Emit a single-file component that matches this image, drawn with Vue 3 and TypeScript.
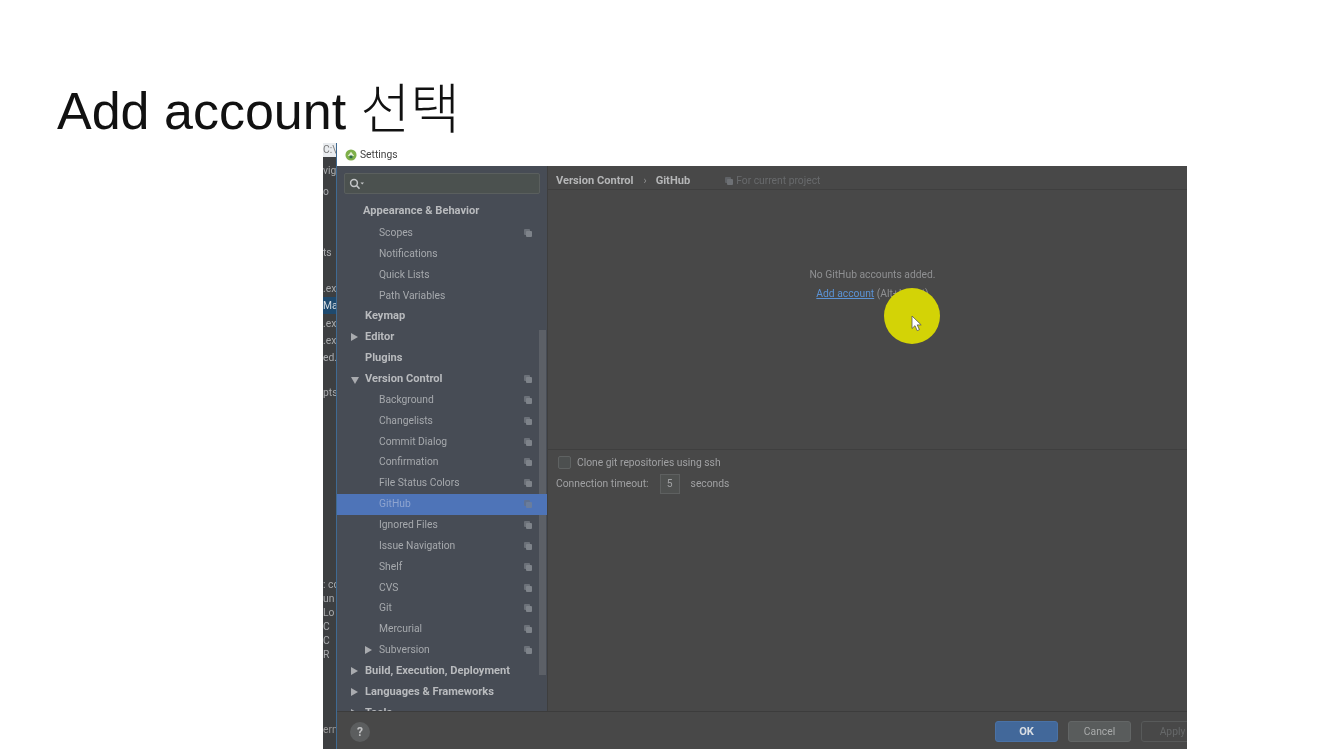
<script setup lang="ts">
interface NavRow {
  label: string
  level: 0 | 1 | 2
  bold?: boolean
  arrow?: 'right' | 'down'
  shared?: boolean
  active?: boolean
}

const navRows: NavRow[] = [
  { label: 'Scopes', level: 2, shared: true },
  { label: 'Notifications', level: 2 },
  { label: 'Quick Lists', level: 2 },
  { label: 'Path Variables', level: 2 },
  { label: 'Keymap', level: 1, bold: true },
  { label: 'Editor', level: 1, bold: true, arrow: 'right' },
  { label: 'Plugins', level: 1, bold: true },
  { label: 'Version Control', level: 1, bold: true, arrow: 'down', shared: true },
  { label: 'Background', level: 2, shared: true },
  { label: 'Changelists', level: 2, shared: true },
  { label: 'Commit Dialog', level: 2, shared: true },
  { label: 'Confirmation', level: 2, shared: true },
  { label: 'File Status Colors', level: 2, shared: true },
  { label: 'GitHub', level: 2, shared: true, active: true },
  { label: 'Ignored Files', level: 2, shared: true },
  { label: 'Issue Navigation', level: 2, shared: true },
  { label: 'Shelf', level: 2, shared: true },
  { label: 'CVS', level: 2, shared: true },
  { label: 'Git', level: 2, shared: true },
  { label: 'Mercurial', level: 2, shared: true },
  { label: 'Subversion', level: 2, arrow: 'right', shared: true },
  { label: 'Build, Execution, Deployment', level: 1, bold: true, arrow: 'right' },
  { label: 'Languages & Frameworks', level: 1, bold: true, arrow: 'right' },
  { label: 'Tools', level: 1, bold: true, arrow: 'right' },
]

// bits of the IDE that stick out behind the dialog
const behind: { text: string; gap: number; selected?: boolean; dot?: boolean }[] = [
  { text: 'C:\\', gap: 0 },
  { text: 'vig', gap: 7 },
  { text: 'o', gap: 7 },
  { text: 'ts', gap: 47 },
  { text: '.ex', gap: 22 },
  { text: 'Mai', gap: 1, selected: true },
  { text: '.ex', gap: 3 },
  { text: '.ex', gap: 3 },
  { text: 'ed.', gap: 3 },
  { text: 'pts', gap: 21 },
  { text: ': co', gap: 178 },
  { text: 'un l', gap: 0 },
  { text: 'Lo', gap: 0, dot: true },
  { text: 'C', gap: 0, dot: true },
  { text: 'C', gap: 0, dot: true },
  { text: 'R', gap: 0, dot: true },
]
</script>

<template>
  <div class="slide">
    <h1 class="title">Add account <span class="title__ko">선택</span></h1>

    <div class="shot">
      <div class="behind">
        <div
          v-for="(item, i) in behind"
          :key="i"
          class="behind__row"
          :class="{ 'behind__row--selected': item.selected, 'behind__row--dot': item.dot }"
          :style="{ marginTop: item.gap + 'px' }"
        >
          {{ item.text }}
        </div>
        <div class="behind__end">ern</div>
      </div>

      <div class="dialog">
        <div class="titlebar">
          <svg class="titlebar__logo" width="12" height="12" viewBox="0 0 13 13">
            <circle cx="6.5" cy="6.5" r="6" fill="#7fb04a" />
            <path d="M3 7.5 6.5 3 10 7.5Z" fill="#e8f0d8" />
            <rect x="5" y="7" width="3" height="3" fill="#2e6b4f" />
          </svg>
          <span>Settings</span>
        </div>

        <div class="body">
          <aside class="sidebar">
            <div class="search">
              <svg width="16" height="12" viewBox="0 0 16 12">
                <circle cx="5" cy="5" r="3.4" fill="none" stroke="#c4c6c8" stroke-width="1.5" />
                <path d="M7.5 7.5 10.5 10.8" stroke="#c4c6c8" stroke-width="1.6" />
                <path d="M11.5 4.5h3.5l-1.75 2z" fill="#c4c6c8" />
              </svg>
            </div>
            <div class="nav">
              <div class="nav__head">Appearance &amp; Behavior</div>
              <div
                v-for="row in navRows"
                :key="row.label"
                class="nav__row"
                :class="[
                  `nav__row--l${row.level}`,
                  { 'nav__row--bold': row.bold, 'nav__row--active': row.active },
                ]"
              >
                <span v-if="row.arrow" class="arrow" :class="`arrow--${row.arrow}`"></span>
                <span class="nav__label">{{ row.label }}</span>
                <svg v-if="row.shared" class="copy" width="8" height="8" viewBox="0 0 8 8">
                  <rect x="0" y="0" width="6" height="6" rx="1" fill="#6b7078" />
                  <rect x="2" y="2" width="6" height="6" rx="1" fill="#7e838a" />
                </svg>
              </div>
              <div class="scrollbar"></div>
            </div>
          </aside>

          <main class="content">
            <div class="crumbs">
              <b>Version Control</b>
              <span class="crumbs__sep">›</span>
              <b>GitHub</b>
              <span class="crumbs__project">
                <svg width="8" height="8" viewBox="0 0 8 8">
                  <rect x="0" y="0" width="6" height="6" rx="1" fill="#5f6266" />
                  <rect x="2" y="2" width="6" height="6" rx="1" fill="#6e7175" />
                </svg>
                For current project
              </span>
            </div>

            <div class="accounts">
              <div>No GitHub accounts added.</div>
              <div class="accounts__add"><a class="link">Add account</a> (Alt+Insert)</div>
            </div>

            <div class="options">
              <label class="check"><span class="check__box"></span>Clone git repositories using ssh</label>
              <div class="timeout">
                <span>Connection timeout:</span>
                <span class="timeout__input">5</span>
                <span>seconds</span>
              </div>
            </div>
          </main>
        </div>

        <footer class="footer">
          <span class="help">?</span>
          <div class="buttons">
            <button class="btn btn--ok">OK</button>
            <button class="btn btn--cancel">Cancel</button>
            <button class="btn btn--apply">Apply</button>
          </div>
        </footer>
      </div>

      <div class="highlight">
        <svg width="12" height="17" viewBox="0 0 12 17">
          <path d="M1 1v12.5l3-2.8 2.2 5 2.2-1-2.2-4.8h4z" fill="#fff" stroke="#555" stroke-width="0.8" />
        </svg>
      </div>
    </div>
  </div>
</template>

<style scoped>
.slide {
  width: 1330px;
  height: 749px;
  display: flex;
  flex-direction: column;
  overflow: hidden;
  background: #fff;
}

.title {
  margin: 0;
  height: 143px;
  box-sizing: border-box;
  padding: 79px 0 0 57px;
  font: 400 52px/62px 'Liberation Sans', 'Noto Sans CJK KR', sans-serif;
  color: #111;
}

.title__ko {
  font-weight: 200;
  font-size: 54px;
}

.shot {
  position: relative;
  display: flex;
  width: 864px;
  height: 606px;
  margin-left: 323px;
  overflow: hidden;
  filter: blur(0.45px);
  font: 400 10.3px/21px Roboto, sans-serif;
  color: #a6a9ad;
}

.shot b {
  font-size: 11.1px;
}

.behind {
  width: 13px;
  flex-shrink: 0;
  overflow: hidden;
  background: #3d3f41;
  border-right: 1px solid #3f6a92;
  box-sizing: content-box;
  color: #a9abad;
  white-space: nowrap;
  position: relative;
}

.behind__row {
  height: 14px;
  line-height: 14px;
}

.behind__row:first-child {
  margin-top: 0;
  background: #e9ecef;
  color: #777;
  height: 14px;
  line-height: 14px;
}

.behind__row--selected {
  background: #1f4a6e;
  color: #d5dbe0;
  height: 17px;
  line-height: 17px;
}

.behind__row--dot {
  color: #a9abad;
}

.behind__end {
  position: absolute;
  left: 0;
  bottom: 9px;
  color: #999;
}

.dialog {
  flex: 1;
  min-width: 0;
  display: flex;
  flex-direction: column;
  background: #484848;
}

.titlebar {
  height: 23px;
  display: flex;
  align-items: center;
  gap: 3px;
  padding: 0 0 0 8px;
  background: #fff;
  color: #444;
}

.body {
  flex: 1;
  min-height: 0;
  display: flex;
}

.sidebar {
  width: 210px;
  flex-shrink: 0;
  display: flex;
  flex-direction: column;
  background: #474c55;
  overflow: hidden;
}

.search {
  height: 21px;
  margin: 7px 7px 0;
  display: flex;
  align-items: center;
  padding-left: 4px;
  background: #4b514f;
  border: 1px solid #5a5f5e;
  border-radius: 2px;
  box-sizing: border-box;
}

.nav {
  position: relative;
  flex: 1;
  min-height: 0;
  overflow: hidden;
  padding-top: 5px;
}

.nav__head {
  height: 24px;
  line-height: 24px;
  padding-left: 26px;
  font-size: 11.1px;
  font-weight: 700;
  color: #b9bbbe;
}

.nav__row {
  position: relative;
  height: 20.87px;
  line-height: 20.87px;
  white-space: nowrap;
}

.nav__row--l1 {
  padding-left: 28px;
}

.nav__row--l2 {
  padding-left: 42px;
}

.nav__row--bold {
  font-size: 11.1px;
  font-weight: 700;
  color: #b9bbbe;
}

.nav__row--active {
  z-index: 1;
  background: #4e74b8;
  color: #8ea4cf;
}

.arrow {
  position: absolute;
  top: 6px;
  width: 0;
  height: 0;
}

.nav__row--l1 .arrow {
  left: 14px;
}

.nav__row--l2 .arrow {
  left: 28px;
}

.arrow--right {
  border-left: 7px solid #a9abaf;
  border-top: 4.5px solid transparent;
  border-bottom: 4.5px solid transparent;
}

.arrow--down {
  margin-top: 2px;
  border-top: 7px solid #a9abaf;
  border-left: 4px solid transparent;
  border-right: 4px solid transparent;
}

.copy {
  position: absolute;
  top: 6px;
  left: 187px;
}

.nav__row--active .copy {
  opacity: 0.6;
}

.scrollbar {
  position: absolute;
  top: 136px;
  left: 202px;
  width: 7px;
  height: 345px;
  background: #5c6067;
}

.content {
  flex: 1;
  min-width: 0;
  display: flex;
  flex-direction: column;
  border-left: 1px solid #3e3e3e;
}

.crumbs {
  height: 24px;
  display: flex;
  align-items: center;
  padding: 6px 0 0 8px;
  border-bottom: 1px solid #3f3f3f;
  box-sizing: border-box;
  color: #b5b6b7;
}

.crumbs__sep {
  margin: 0 9px 0 10px;
  color: #909192;
}

.crumbs__project {
  display: flex;
  align-items: center;
  gap: 3px;
  margin-left: 35px;
  color: #686a6c;
}

.accounts {
  height: 260px;
  box-sizing: border-box;
  padding: 75px 0 0 10px;
  text-align: center;
  line-height: 20px;
  color: #8f9092;
  border-bottom: 1px solid #3f3f3f;
  width: 100%;
}

.accounts__add {
  margin-top: -1px;
}

.link {
  color: #5b93d6;
  text-decoration: underline;
}

.options {
  padding: 2px 8px;
  color: #a0a1a3;
}

.check {
  display: flex;
  align-items: center;
  gap: 6px;
  height: 21px;
  padding-left: 2px;
}

.check__box {
  width: 13px;
  height: 13px;
  box-sizing: border-box;
  background: #4c4f4f;
  border: 1px solid #5f6262;
  border-radius: 2px;
}

.timeout {
  display: flex;
  align-items: center;
  gap: 11px;
  height: 21px;
}

.timeout__input {
  width: 20px;
  height: 20px;
  line-height: 18px;
  text-align: center;
  box-sizing: border-box;
  background: #4f5150;
  border: 1px solid #5e6060;
}

.footer {
  height: 38px;
  flex-shrink: 0;
  display: flex;
  align-items: center;
  justify-content: space-between;
  box-sizing: border-box;
  padding: 2px 0 0 13px;
  background: #484848;
  border-top: 1px solid #3c3c3c;
}

.help {
  width: 20px;
  height: 20px;
  line-height: 20px;
  border-radius: 50%;
  text-align: center;
  background: #5c5e5f;
  color: #c0c1c2;
  font-size: 12px;
  font-weight: 700;
}

.buttons {
  display: flex;
  gap: 10px;
  width: 192px;
  overflow: hidden;
}

.btn {
  flex-shrink: 0;
  width: 63px;
  height: 21px;
  padding: 0;
  border-radius: 3px;
  box-sizing: border-box;
  font: 400 10.3px Roboto, sans-serif;
}

.btn--ok {
  background: #42689a;
  border: 1px solid #4a72a6;
  color: #d8dde3;
  font-size: 11.1px;
  font-weight: 700;
}

.btn--cancel {
  background: #595c5c;
  border: 1px solid #636666;
  color: #a9abab;
}

.btn--apply {
  background: #484848;
  border: 1px solid #585a5a;
  color: #666869;
}

.highlight {
  position: absolute;
  left: 561px;
  top: 145px;
  width: 56px;
  height: 56px;
  display: flex;
  align-items: center;
  justify-content: center;
  padding: 14px 0 0 10px;
  box-sizing: border-box;
  border-radius: 50%;
  background: #d3d306;
}
</style>

<style>
html,
body {
  margin: 0;
  background: #fff;
}
</style>
